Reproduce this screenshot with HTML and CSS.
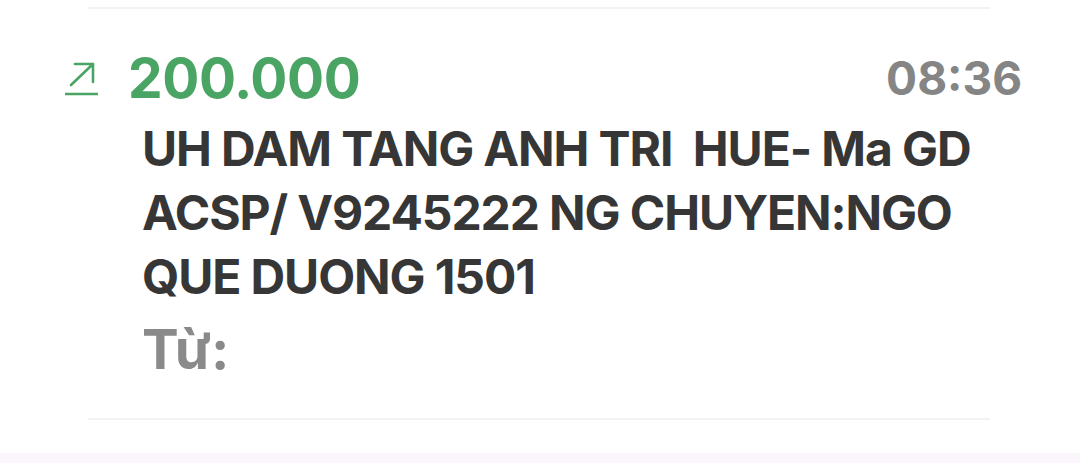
FILE: index.html
```html
<!DOCTYPE html>
<html lang="vi">
<head>
  <meta charset="UTF-8">
  <meta name="viewport" content="width=device-width, initial-scale=1.0">
  <title>Lịch sử giao dịch</title>
  <link rel="stylesheet" href="styles.css">
</head>
<body>
  <div class="tx-list">
    <div class="tx-divider"></div>

    <div class="tx-item">
      <div class="tx-head">
        <!-- biểu tượng tiền vào -->
        <svg class="tx-icon" width="34" height="34" viewBox="0 0 34 34" fill="none">
          <path d="M7 23 L29 2 M11 2 H29 V20" stroke="currentColor" stroke-width="2.6" stroke-linecap="round" stroke-linejoin="round"/>
          <path d="M1 32 H34" stroke="currentColor" stroke-width="2.6"/>
        </svg>
        <span class="tx-amount">200.000</span>
        <span class="tx-time">08:36</span>
      </div>
      <div class="tx-desc">UH DAM TANG ANH TRI&nbsp; HUE- Ma GD ACSP/ V9245222 NG CHUYEN:NGO QUE DUONG 1501</div>
      <div class="tx-from">Từ:</div>
    </div>

    <div class="tx-divider"></div>
  </div>
  <div class="tab-strip"></div>
</body>
</html>
```

FILE: styles.css
```css
body {
  margin: 0;
  padding: 0;
  font-family: Inter, "Liberation Sans", sans-serif;
  background-color: #fff;
  color: #333;
}

.tx-list {
  padding-top: 7px;
}

.tx-divider {
  height: 2px;
  margin: 0 90px 0 88px;
  background-color: #f2f2f2;
}

.tx-item {
  padding: 41px 58px 37px 64px;
}

.tx-head {
  display: flex;
  align-items: center;
}

.tx-icon {
  color: #4aa463;
  margin-top: 1px;
}

.tx-amount {
  margin-left: 30px;
  flex: 1;
  font-size: 55px;
  line-height: 55px;
  font-weight: 700;
  letter-spacing: -0.4px;
  color: #4aa463;
}

.tx-time {
  font-size: 46px;
  font-weight: 700;
  color: #858585;
}

.tx-desc {
  margin: 11px 0 0 78px;
  max-width: 850px;
  font-size: 48px;
  line-height: 64px;
  font-weight: 700;
  letter-spacing: -1.1px;
  color: #363636;
}

.tx-from {
  margin: 8px 0 0 78px;
  font-size: 55px;
  line-height: 64px;
  font-weight: 700;
  color: #8a8a8a;
}

.tab-strip {
  height: 10px;
  margin-top: 33px;
  background-color: #faf6fc;
}
```
